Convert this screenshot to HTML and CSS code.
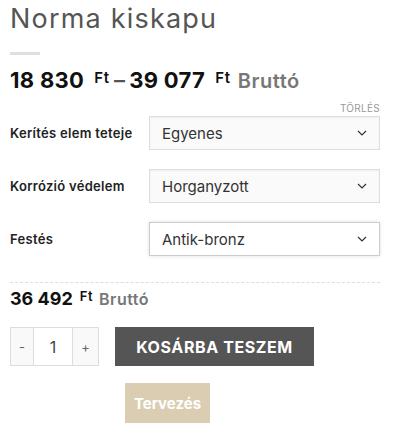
FILE: index.html
```html
<!DOCTYPE html>
<html lang="hu">
<head>
    <meta charset="utf-8">
    <meta name="viewport" content="width=device-width, initial-scale=1">
    <title>Norma kiskapu</title>
    <link rel="stylesheet" href="styles.css">
</head>
<body>
    <div class="product">
        <h1 class="title">Norma kiskapu</h1>
        <div class="divider"></div>

        <p class="price-range"><span class="num">18 830</span><span class="cur">Ft</span><span class="dash">–</span><span class="num">39 077</span><span class="cur">Ft</span><span class="gross">Bruttó</span></p>

        <div class="reset-row"><a href="#" class="reset">Törlés</a></div>

        <div class="variations">
            <div class="var-row">
                <label for="teteje">Kerítés elem teteje</label>
                <div class="select-box">
                    <span>Egyenes</span>
                    <svg width="10" height="6" viewBox="0 0 10 6"><path d="M1 1l4 4 4-4" fill="none" stroke="#333" stroke-width="1.2"/></svg>
                </div>
            </div>
            <div class="var-row">
                <label for="korrozio">Korrózió védelem</label>
                <div class="select-box">
                    <span>Horganyzott</span>
                    <svg width="10" height="6" viewBox="0 0 10 6"><path d="M1 1l4 4 4-4" fill="none" stroke="#333" stroke-width="1.2"/></svg>
                </div>
            </div>
            <div class="var-row">
                <label for="festes">Festés</label>
                <div class="select-box active">
                    <span>Antik-bronz</span>
                    <svg width="10" height="6" viewBox="0 0 10 6"><path d="M1 1l4 4 4-4" fill="none" stroke="#333" stroke-width="1.2"/></svg>
                </div>
            </div>
        </div>

        <div class="dashed"></div>

        <p class="single-price"><span class="num">36 492</span><span class="cur">Ft</span><span class="gross">Bruttó</span></p>

        <div class="cart-row">
            <div class="qty">
                <button class="qty-btn minus">-</button>
                <span class="qty-val">1</span>
                <button class="qty-btn plus">+</button>
            </div>
            <button class="add-cart">Kosárba teszem</button>
        </div>

        <div class="design-row">
            <button class="design">Tervezés</button>
        </div>
    </div>
</body>
</html>
```

FILE: styles.css
```css
body {
    margin: 0;
    padding: 0;
    background-color: white;
    font-family: Inter, 'Noto Sans', sans-serif;
    color: #222;
}

.product {
    width: 370px;
    padding: 0 10px;
}

.title {
    margin: 0;
    padding-top: 2px;
    font-size: 27px;
    font-weight: 400;
    line-height: 34px;
    color: #555;
    letter-spacing: 1.2px;
}

.divider {
    width: 30px;
    height: 3px;
    background-color: #e0e0e0;
    margin-top: 16px;
}

.price-range {
    margin: 9px 0 0;
    font-size: 22px;
    font-weight: 700;
    line-height: 28px;
    color: #111;
    letter-spacing: 0.3px;
}

.cur {
    font-size: 15px;
    font-weight: 600;
    vertical-align: 5px;
    letter-spacing: 0.8px;
    margin-left: 10px;
}

.dash {
    color: #555;
    font-size: 22px;
    font-weight: 600;
    margin: 0 4px 0 4px;
}

.price-range .cur + .gross {
    margin-left: 7px;
}

.gross {
    color: #777;
    font-weight: 600;
    font-size: 20px;
    letter-spacing: 0.5px;
}

.reset-row {
    text-align: right;
    line-height: 12px;
    margin-top: 5px;
}

.reset {
    font-size: 10px;
    color: #999;
    text-transform: uppercase;
    text-decoration: none;
    letter-spacing: 0.3px;
}

.variations {
    display: flex;
    flex-direction: column;
    gap: 19px;
    margin-top: 2px;
}

.var-row {
    display: flex;
    align-items: center;
}

.var-row label {
    width: 139px;
    font-size: 13px;
    font-weight: 600;
    color: #222;
    letter-spacing: 0.3px;
}

.select-box {
    flex: 1;
    height: 32px;
    display: flex;
    align-items: center;
    justify-content: space-between;
    padding: 0 12px;
    border: 1px solid #ddd;
    background-color: #fafafa;
    box-shadow: inset 0 1px 2px rgba(0, 0, 0, 0.05);
    font-size: 15px;
    color: #333;
}

.select-box.active {
    background-color: white;
    border-color: #ccc;
    box-shadow: 0 0 4px rgba(0, 0, 0, 0.12);
}

.dashed {
    border-top: 1px dashed #ddd;
    margin-top: 26px;
}

.single-price {
    margin: 2px 0 0;
    font-size: 18px;
    font-weight: 700;
    line-height: 22px;
    color: #111;
}

.single-price .cur {
    font-size: 13px;
    letter-spacing: 0.5px;
    margin-left: 7px;
    vertical-align: 4px;
}

.single-price .gross {
    font-size: 16px;
    margin-left: 6px;
}

.cart-row {
    display: flex;
    align-items: center;
    margin-top: 17px;
}

.qty {
    display: flex;
    height: 39px;
    border: 1px solid #ddd;
    box-sizing: border-box;
}

.qty-btn {
    width: 22px;
    border: none;
    background-color: #f9f9f9;
    color: #666;
    font-size: 13px;
    padding: 0;
    font-family: inherit;
}

.qty-btn.plus {
    width: 25px;
}

.qty-val {
    width: 38px;
    border-left: 1px solid #ddd;
    border-right: 1px solid #ddd;
    background-color: white;
    display: flex;
    align-items: center;
    justify-content: center;
    font-size: 16px;
    color: #444;
}

.add-cart {
    margin-left: 16px;
    width: 199px;
    height: 39px;
    border: none;
    background-color: #555;
    color: white;
    font-family: inherit;
    font-size: 16px;
    font-weight: 700;
    letter-spacing: 0.6px;
    text-transform: uppercase;
    cursor: pointer;
}

.design-row {
    margin-top: 17px;
    padding-left: 115px;
}

.design {
    width: 85px;
    height: 40px;
    border: none;
    background-color: #dbcdb1;
    color: white;
    font-family: inherit;
    font-size: 15px;
    font-weight: 700;
    cursor: pointer;
}
```
